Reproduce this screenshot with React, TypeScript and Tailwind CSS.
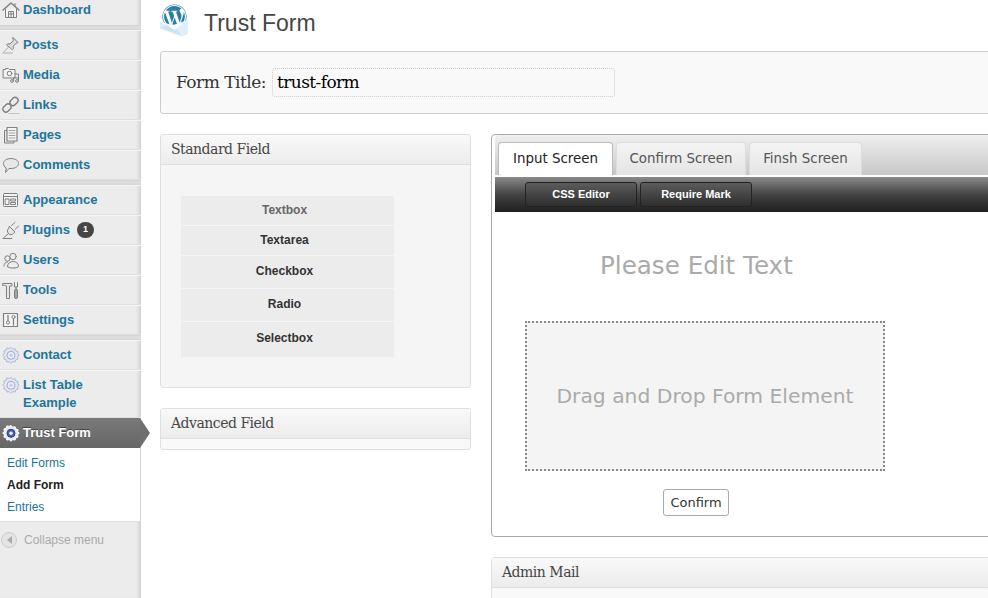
import type { ReactNode } from 'react'
import { FaWordpress } from 'react-icons/fa'

const Ico = ({ children }: { children: ReactNode }) => (
  <svg width="20" height="20" viewBox="0 0 20 20" fill="none" stroke="#808080" strokeWidth="1" strokeLinejoin="round" strokeLinecap="round">
    {children}
  </svg>
)

const icons: Record<string, ReactNode> = {
  dashboard: (
    <Ico>
      <path d="M2 10 10 3l8 7" strokeWidth="1.5" />
      <path d="M4.500 9v8.500h11V9" fill="#f4f4f4" />
      <path d="M7.500 17.500v-6h5v6M10 11.500v6M7.500 14h5M14 3.500v3" />
    </Ico>
  ),
  posts: (
    <Ico>
      <path d="M12 2.500l5 5-1.800.7-3 3 .2 2.500-1 1L5.500 9.800l1-1 2.500.2 3-3z" fill="#ddd" />
      <path d="M7.500 12 3 17M1.500 18h10" stroke="#b0b0b0" />
    </Ico>
  ),
  media: (
    <Ico>
      <path d="M2.500 4.500h2v-1h3l1 1h5.500v8.500H2.500z" fill="#f2f2f2" />
      <circle cx="8.500" cy="8.500" r="2.300" />
      <path d="M14 9h3.500v6" />
      <circle cx="11" cy="16" r="1.400" />
      <circle cx="16" cy="16" r="1.400" />
      <path d="M12.400 16v-3h5" />
    </Ico>
  ),
  links: (
    <Ico>
      <rect x="1.500" y="10" width="9" height="6" rx="3" transform="rotate(-45 6 13)" strokeWidth="1.400" />
      <rect x="8.500" y="3.500" width="9" height="6" rx="3" transform="rotate(-45 13 6.500)" strokeWidth="1.400" />
      <path d="M8 18.500h10" stroke="#c4c4c4" />
    </Ico>
  ),
  pages: (
    <Ico>
      <path d="M6 5.500H3.500V18H13v-2" fill="#e4e4e4" />
      <path d="M6 2.500h10V16H6z" fill="#f5f5f5" strokeWidth="1.200" />
      <path d="M8 5.500h6M8 8h6M8 10.500h6M8 13h6" stroke="#a0a0a0" />
    </Ico>
  ),
  comments: (
    <Ico>
      <path d="M10 3.500c4.500 0 7.500 2.100 7.500 5S14.500 13.500 10 13.500H8L4.500 17.500l.7-4.500C3.500 12 2.500 10.400 2.500 8.500c0-2.900 3-5 7.500-5z" fill="#e8e8e8" />
    </Ico>
  ),
  appearance: (
    <Ico>
      <rect x="2.500" y="3.500" width="14" height="13" rx="1" fill="#f4f4f4" />
      <path d="M2.500 6.500h14M4.500 9h3.500v5.500H4.500zM10 9h4.500v2H10zM10 12.500h4.500v2H10z" />
    </Ico>
  ),
  plugins: (
    <Ico>
      <path d="M8.500 6.500l5.500 5.500-1.500 1.500c-1.500 1.500-3.500 1.500-5 0s-1.500-3.500 0-5z" fill="#e6e6e6" />
      <path d="M10.500 5.500 14 2.500M14 9.500 17.500 6M7.500 13.500 2.500 18M2 18.500h9" />
    </Ico>
  ),
  users: (
    <Ico>
      <circle cx="12" cy="6.500" r="3.200" fill="#eee" />
      <circle cx="6.500" cy="8.500" r="2.700" fill="#eee" />
      <path d="M3 16c0-2.500 1.500-4 3.500-4" />
      <path d="M6.500 16.500c0-3 2.500-5 5.500-5s5.500 2 5.500 4.500c0 1.500-2.500 2-5.500 2s-5.500-.5-5.500-1.500z" fill="#eee" />
    </Ico>
  ),
  tools: (
    <Ico>
      <path d="M2 3.500h9V6H8.500v12.500h-3V6C4 5.500 3 5 2 5.500z" fill="#e8e8e8" />
      <path d="M13.500 2.500v4.500h3V2.500M15 7v2" />
      <rect x="13.500" y="9" width="3" height="9.500" rx="1.500" fill="#a0a0a0" />
    </Ico>
  ),
  settings: (
    <Ico>
      <rect x="2.500" y="3.500" width="14" height="13" fill="#f4f4f4" strokeWidth="1.200" />
      <path d="M7 5.500v5M12.500 9v6" strokeWidth="1.300" />
      <circle cx="7" cy="12.500" r="1.600" />
      <circle cx="12.500" cy="7" r="1.600" />
    </Ico>
  ),
}

const Gear = ({ active = false }: { active?: boolean }) => (
  <svg width="20" height="20" viewBox="0 0 20 20">
    <path
      d="M10 2.500l1.800 1.700 2.300-.5.700 2.300 2.300.7-.5 2.300L18.300 10l-1.700 1.800.5 2.300-2.300.7-.7 2.300-2.300-.5L10 18.300l-1.800-1.700-2.300.5-.7-2.300-2.300-.7.5-2.300L1.700 10l1.700-1.800-.5-2.300 2.300-.7.7-2.300 2.300.5z"
      fill={active ? '#e8ecf8' : '#e2e4f0'}
      stroke={active ? '#fff' : '#b4bad6'}
    />
    <circle cx="10" cy="10.300" r="4" fill={active ? '#4a5fa8' : '#eceef6'} stroke={active ? '#2c3f85' : '#a3abcc'} />
    <circle cx="10" cy="10.300" r="1.800" fill={active ? '#e8ecf8' : '#cdd1e6'} />
  </svg>
)

const MenuItem = ({ icon, label, badge, h = 'h-[30px]' }: { icon: ReactNode; label: ReactNode; badge?: string; h?: string }) => (
  <div className={`flex ${h} shrink-0 items-start border-t border-t-[#f6f6f6] border-b border-b-[#dfdfdf]`}>
    <span className="ml-[1px] mt-[4px] flex w-[22px] shrink-0">{icon}</span>
    <span className="mt-[5px] text-[13px] leading-[18px] font-bold text-[#21759b]">{label}</span>
    {badge && (
      <span className="mt-[6px] ml-[7px] flex h-[16px] w-[17px] items-center justify-center rounded-full bg-[#464646] text-[9px] font-bold text-white">
        {badge}
      </span>
    )}
  </div>
)

const Sep = () => <div className="h-[5px] shrink-0 border-y border-y-[#d5d5d5] bg-[#dcdcdc]" />

const Sidebar = () => (
  <aside className="relative z-10 flex h-[598px] w-[141px] shrink-0 flex-col bg-[#ececec] shadow-[inset_-5px_0_5px_-4px_rgba(0,0,0,0.18)] font-['Liberation_Sans',sans-serif]">
    <div className="flex h-[25px] shrink-0 items-start">
      <span className="ml-[1px] flex w-[22px] shrink-0">{icons.dashboard}</span>
      <span className="mt-[1px] text-[13px] leading-[18px] font-bold text-[#21759b]">Dashboard</span>
    </div>
    <Sep />
    <MenuItem icon={icons.posts} label="Posts" />
    <MenuItem icon={icons.media} label="Media" />
    <MenuItem icon={icons.links} label="Links" />
    <MenuItem icon={icons.pages} label="Pages" />
    <MenuItem icon={icons.comments} label="Comments" />
    <Sep />
    <MenuItem icon={icons.appearance} label="Appearance" />
    <MenuItem icon={icons.plugins} label="Plugins" badge="1" />
    <MenuItem icon={icons.users} label="Users" />
    <MenuItem icon={icons.tools} label="Tools" />
    <MenuItem icon={icons.settings} label="Settings" />
    <Sep />
    <MenuItem icon={<Gear />} label="Contact" />
    <MenuItem icon={<Gear />} label={<>List Table<br />Example</>} h="h-[48px]" />
    <div className="relative flex h-[30px] w-[140px] shrink-0 items-center bg-gradient-to-b from-[#7a7a7a] to-[#666] text-[13px] font-bold text-white">
      <span className="ml-[1px] flex w-[22px] shrink-0"><Gear active /></span>
      <span className="[text-shadow:0_-1px_0_#444]">Trust Form</span>
      <span className="absolute left-[140px] top-0 h-0 w-0 border-y-[15px] border-l-[10px] border-y-transparent border-l-[#6f6f6f]" />
    </div>
    <div className="flex h-[74px] w-[140px] shrink-0 flex-col border-b border-b-[#dfdfdf] bg-white pt-[4px] pl-[7px] text-[12px] leading-[22px] text-[#21759b]">
      <span>Edit Forms</span>
      <span className="font-bold text-[#222]">Add Form</span>
      <span>Entries</span>
    </div>
    <div className="mt-[9px] ml-[1px] flex items-center gap-[7px] text-[12px] text-[#aaa]">
      <span className="flex h-[16px] w-[16px] items-center justify-center rounded-full border border-[#ccc] bg-[#e4e4e4]">
        <span className="h-0 w-0 border-y-[4px] border-r-[5px] border-y-transparent border-r-[#aaa]" />
      </span>
      Collapse menu
    </div>
  </aside>
)

const BoxHeader = ({ children }: { children: ReactNode }) => (
  <div className="flex h-[30px] shrink-0 items-center border-b border-b-[#dfdfdf] bg-gradient-to-b from-[#f9f9f9] to-[#ececec] pl-[10px] font-['DejaVu_Serif','Liberation_Serif',serif] text-[14px] tracking-[-0.5px] text-[#464646]">
    {children}
  </div>
)

const fields = [
  { label: 'Textbox', cls: 'h-[29px] pb-[1px] text-[#666]' },
  { label: 'Textarea', cls: 'h-[29px] pb-[1px] text-[#333]' },
  { label: 'Checkbox', cls: 'h-[32px] pb-[3px] text-[#333]' },
  { label: 'Radio', cls: 'h-[32px] pb-[3px] text-[#333]' },
  { label: 'Selectbox', cls: 'h-[35px] pb-[3px] text-[#333]' },
]

const LeftColumn = () => (
  <div className="flex w-[311px] shrink-0 flex-col">
    <section className="h-[254px] shrink-0 overflow-hidden rounded-[3px] border border-[#dfdfdf] bg-[#f5f5f5]">
      <BoxHeader>Standard Field</BoxHeader>
      <div className="ml-[20px] mt-[31px] flex w-[213px] flex-col gap-px font-['Liberation_Sans',sans-serif]">
        {fields.map((f) => (
          <div key={f.label} className={`flex ${f.cls} items-center justify-center bg-[#ececec] pr-[6px] text-[12px] font-bold`}>
            {f.label}
          </div>
        ))}
      </div>
    </section>
    <section className="mt-[20px] h-[42px] shrink-0 overflow-hidden rounded-[3px] border border-[#dfdfdf] bg-[#f9f9f9]">
      <BoxHeader>Advanced Field</BoxHeader>
    </section>
  </div>
)

const tabs = [
  { label: 'Input Screen', w: 'w-[115px]', active: true },
  { label: 'Confirm Screen', w: 'w-[130px]', active: false },
  { label: 'Finsh Screen', w: 'w-[113px]', active: false },
]

const RightColumn = () => (
  <div className="flex w-[600px] shrink-0 flex-col">
    <section className="h-[403px] shrink-0 rounded-[4px] border border-[#aaa] bg-white font-['DejaVu_Sans',sans-serif]">
      <div className="mx-[3px] flex h-[40px] items-end gap-[3px] rounded-t-[4px] bg-gradient-to-b from-[#efefef] to-[#c8c8c8] pl-[3px]">
        {tabs.map((t) => (
          <div
            key={t.label}
            className={`flex h-[33px] ${t.w} items-center justify-center rounded-t-[4px] border border-b-0 text-[13.4px] ${
              t.active ? 'border-[#bbb] bg-white text-[#222]' : 'border-[#ddd] bg-gradient-to-b from-[#f4f4f4] to-[#e4e4e4] text-[#555]'
            }`}
          >
            {t.label}
          </div>
        ))}
      </div>
      <div className="ml-[3px] mt-[2px] flex h-[35px] gap-[3px] bg-gradient-to-b from-[#8a8a8a] via-[#444] to-[#1f1f1f] pl-[30px] pt-[5px] font-['Liberation_Sans',sans-serif] text-[11px] font-bold text-white">
        <div className="flex h-[25px] w-[112px] items-center justify-center rounded-[3px] border border-[#222] bg-gradient-to-b from-[#5c5c5c] to-[#2e2e2e]">CSS Editor</div>
        <div className="flex h-[25px] w-[112px] items-center justify-center rounded-[3px] border border-[#222] bg-gradient-to-b from-[#5c5c5c] to-[#2e2e2e]">Require Mark</div>
      </div>
      <div className="mt-[39px] ml-[108px] text-[24.6px] leading-[30px] text-[#aaa]">Please Edit Text</div>
      <div className="ml-[33px] mt-[40px] flex h-[150px] w-[360px] items-center justify-center border-2 border-dotted border-[#888] bg-[#f4f4f4] text-[20.300px] text-[#aaa]">
        Drag and Drop Form Element
      </div>
      <div className="ml-[171px] mt-[18px] flex h-[27px] w-[66px] items-center justify-center rounded-[3px] border border-[#aaa] bg-white text-[13px] text-[#333]">
        Confirm
      </div>
    </section>
    <section className="mt-[20px] h-[60px] shrink-0 rounded-[3px] border border-[#dfdfdf] bg-[#f9f9f9]">
      <BoxHeader>Admin Mail</BoxHeader>
    </section>
  </div>
)

// envelope with the WordPress ball sticking out of it
const PageIcon = () => (
  <div className="relative h-[32px] w-[30px]">
    <span className="absolute left-[2px] top-0 flex">
      <FaWordpress size={25} color="#2a7fa8" />
    </span>
    <svg width="30" height="32" viewBox="0 0 30 32" className="absolute left-0 top-0">
      <path d="M0 18l13 8 15-10-1 14-5 2L0 24z" fill="#dff0fa" stroke="#d2e6f2" strokeWidth="0.5" />
      <path d="M0 24l12-5 10 13z" fill="#c9e4f5" />
      <path d="M0 18l13 3 15-5-13 10z" fill="#f6fbfe" />
    </svg>
  </div>
)

export default function App() {
  return (
    <div className="flex h-[598px] w-[988px] overflow-hidden bg-white">
      <Sidebar />
      <main className="ml-[19px] flex w-[900px] shrink-0 flex-col">
        <header className="flex h-[51px] shrink-0 items-start">
          <span className="mt-[4px] flex w-[44px]"><PageIcon /></span>
          <h2 className="mt-[8px] font-['Liberation_Sans',sans-serif] text-[23px] leading-[30px] text-[#464646]">Trust Form</h2>
        </header>
        <div className="flex h-[63px] shrink-0 items-center rounded-[3px] border border-[#ccc] bg-[#f9f9f9] pl-[15px] font-['DejaVu_Serif','Liberation_Serif',serif]">
          <span className="text-[17px] tracking-[-0.5px] text-[#333]">Form Title:</span>
          <div className="ml-[6px] flex h-[29px] w-[343px] items-center rounded-[3px] border border-dotted border-[#ccc] pl-[4px] text-[17px] tracking-[-0.6px] text-black">
            trust-form
          </div>
        </div>
        <div className="mt-[20px] flex shrink-0 gap-[20px]">
          <LeftColumn />
          <RightColumn />
        </div>
      </main>
    </div>
  )
}
